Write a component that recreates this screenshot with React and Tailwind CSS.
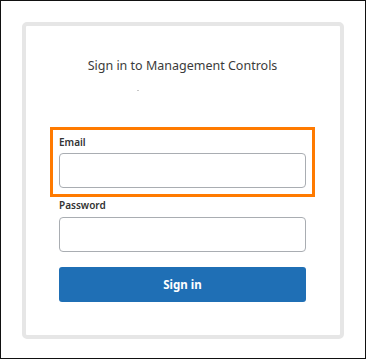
export default function App() {
  return (
    <div className="w-[367px] h-[360px] bg-white" style={{ fontFamily: '"Noto Sans", "Open Sans", sans-serif' }}>
      <div className="w-[366px] h-[359px] border border-[#111] pl-[21px] pt-[21px]">
        <div className="w-[322px] h-[317px] border-4 border-[#e6e6e6] rounded-[5px] bg-white flex flex-col pl-[24px]">
          <div className="mt-[30px] h-[20px] leading-[20px] text-[12.5px] text-[#3b3b3b] w-[265px] text-center">
            Sign in to Management Controls
          </div>
          <div className="mt-[14px] ml-[87px] w-[2px] h-[1px] bg-[#c8c8c8]" />
          <div className="mt-[36px] w-[265px] border-[3px] border-[#ff7a00] px-[6px] pt-[4px] pb-[6px]">
            <div className="text-[10px] leading-[16px] font-semibold text-[#333]">Email</div>
            <div className="mt-[3px] h-[35px] w-[247px] rounded-[4px] border border-[#a9adb2] bg-white" />
          </div>
          <div className="ml-[9px] w-[247px]">
            <div className="text-[10px] leading-[16px] font-semibold text-[#333]">Password</div>
            <div className="mt-[4px] h-[35px] w-[247px] rounded-[4px] border border-[#a9adb2] bg-white" />
            <button className="mt-[15px] h-[35px] w-[247px] rounded-[3px] bg-[#1f6fb5] text-white text-[11.5px] font-bold flex items-center justify-center">
              Sign in
            </button>
          </div>
        </div>
      </div>
    </div>
  );
}
